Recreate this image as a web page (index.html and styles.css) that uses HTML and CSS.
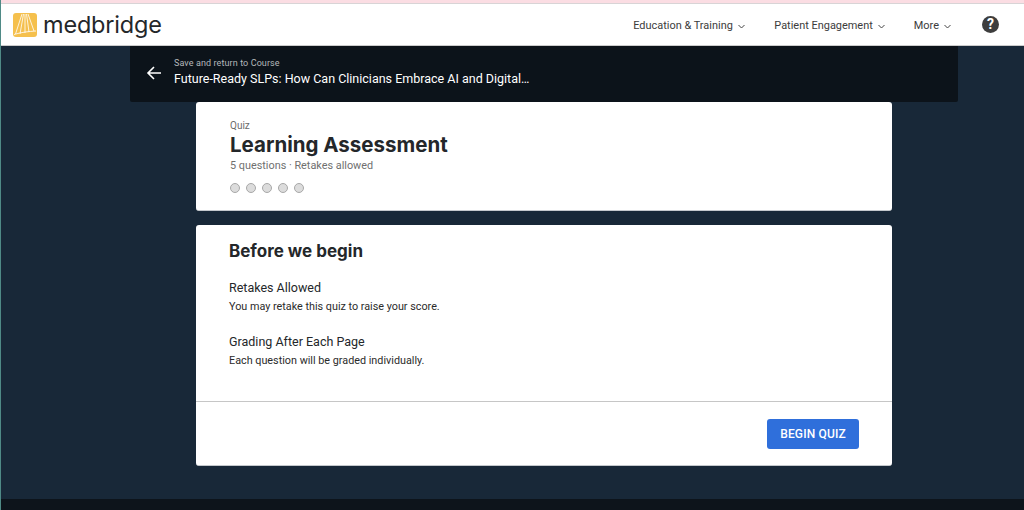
FILE: index.html
```html
<!DOCTYPE html>
<html lang="en">
<head>
<meta charset="utf-8">
<title>Learning Assessment</title>
<link rel="stylesheet" href="styles.css">
</head>
<body>
<div class="strip"></div>
<header class="topbar">
  <a class="brand">
    <svg class="logo" width="24" height="24" viewBox="0 0 24 24" aria-hidden="true">
      <rect width="24" height="24" rx="3" fill="#f5c04d"/>
      <path d="M9 1 2.500 21M10.500 1 7 21M12 1v19M13.500 1 16 19M15 1l6 17M1 21.500C9 19 16 18.500 23 18" fill="none" stroke="#fff" stroke-width=".8"/>
    </svg>
    <span class="wordmark">medbridge</span>
  </a>
  <nav class="nav">
    <a class="nav-item">Education &amp; Training <svg class="chev" width="7" height="5" viewBox="0 0 7 5"><path d="M.5 1l3 3 3-3" fill="none" stroke="#444" stroke-width="1"/></svg></a>
    <a class="nav-item">Patient Engagement <svg class="chev" width="7" height="5" viewBox="0 0 7 5"><path d="M.5 1l3 3 3-3" fill="none" stroke="#444" stroke-width="1"/></svg></a>
    <a class="nav-item">More <svg class="chev" width="7" height="5" viewBox="0 0 7 5"><path d="M.5 1l3 3 3-3" fill="none" stroke="#444" stroke-width="1"/></svg></a>
    <span class="help">?</span>
  </nav>
</header>
<main class="main">
  <div class="course-bar">
    <svg class="back" width="16" height="16" viewBox="0 0 16 16" aria-hidden="true"><path d="M15 8H2M8 2 2 8l6 6" fill="none" stroke="#fff" stroke-width="1.600"/></svg>
    <div class="course-text">
      <div class="course-label">Save and return to Course</div>
      <div class="course-title">Future-Ready SLPs: How Can Clinicians Embrace AI and Digital…</div>
    </div>
  </div>
  <section class="card card-head">
    <div class="eyebrow">Quiz</div>
    <h1 class="title">Learning Assessment</h1>
    <div class="meta">5 questions · Retakes allowed</div>
    <div class="dots"><i class="dot"></i><i class="dot"></i><i class="dot"></i><i class="dot"></i><i class="dot"></i></div>
  </section>
  <section class="card card-info">
    <div class="info-body">
      <h2 class="subtitle">Before we begin</h2>
      <div class="rule">
        <h3 class="rule-title">Retakes Allowed</h3>
        <p class="rule-text">You may retake this quiz to raise your score.</p>
      </div>
      <div class="rule">
        <h3 class="rule-title">Grading After Each Page</h3>
        <p class="rule-text">Each question will be graded individually.</p>
      </div>
    </div>
    <div class="info-foot"><button class="begin">BEGIN QUIZ</button></div>
  </section>
</main>
<footer class="footer"></footer>
</body>
</html>
```
FILE: styles.css
```css
* { box-sizing: border-box; }
html, body { margin: 0; height: 510px; overflow: hidden; }
body {
  display: flex;
  flex-direction: column;
  background: #182838;
  font-family: Roboto, "Liberation Sans", sans-serif;
  border-left: 1px solid #4f8a86;
}
.strip { height: 4px; background: #fbdde3; border-bottom: 1px solid #d8d4d6; flex: none; margin-left: -1px; }
.topbar {
  height: 42px;
  flex: none;
  background: #fff;
  border-bottom: 1px solid #ccc;
  display: flex;
  align-items: center;
  justify-content: space-between;
  padding: 0 25px 0 12px;
}
.brand { display: flex; align-items: center; gap: 6px; }
.logo { display: block; }
.wordmark { font-family: Inter, sans-serif; font-weight: 400; font-size: 23.500px; line-height: 30px; color: #24272a; letter-spacing: -.2px; }
.nav { display: flex; align-items: center; }
.nav-item { font-size: 10.950px; line-height: 16px; color: #3c3c3c; margin: 2px 29.500px 0 0; display: flex; align-items: center; gap: 5px; }
.nav-item:nth-child(2) { margin-right: 29px; }
.nav-item:nth-child(3) { margin-right: 31px; }
.chev { display: block; margin-top: 2px; }
.help {
  width: 17px; height: 17px; border-radius: 50%;
  background: #3d3d3d; color: #fff;
  font-size: 14px; font-weight: 700; line-height: 17px; text-align: center;
}
.main { flex: 1; display: flex; flex-direction: column; min-height: 0; margin-left: -1px; }
.course-bar {
  width: 828px; height: 56px; flex: none;
  margin-left: 130px;
  background: #0c131a;
  border-radius: 0 0 2px 2px;
  display: flex; align-items: center;
  padding: 0 0 0 16px;
  gap: 12px;
}
.back { margin-top: -3px; }
.course-text { margin-top: -3px; }
.course-label { font-size: 9px; line-height: 12px; color: #b4b8bb; letter-spacing: .1px; }
.course-title { font-size: 12.500px; line-height: 18px; color: #fff; margin-top: 1px; }
.card { width: 696px; background: #fff; border-radius: 3px; flex: none; margin-left: 196px; border-bottom: 1px solid #c4c8cc; }
.card-head { height: 109px; padding: 18px 34px 0; margin-bottom: 14px; }
.eyebrow { font-size: 10px; line-height: 12px; color: #6b6b6b; }
.title { margin: -1px 0 0; font-family: Inter, sans-serif; font-size: 20.500px; font-weight: 700; line-height: 27px; color: #24272a; }
.meta { font-size: 10.850px; line-height: 14px; color: #6f6f6f; margin-top: 1px; }
.dots { display: flex; gap: 6px; margin-top: 10px; }
.dot { width: 10px; height: 10px; border-radius: 50%; background: #dcdcdc; border: 1px solid #a8a8a8; }
.card-info { height: 241px; display: flex; flex-direction: column; }
.info-body { flex: none; height: 177px; padding: 14px 33px 0; border-bottom: 1px solid #c6c6c6; }
.subtitle { margin: 0 0 16px; font-family: Inter, sans-serif; font-size: 17px; font-weight: 700; line-height: 24px; color: #24272a; }
.rule { margin-bottom: 19px; }
.rule-title { margin: 0; font-size: 12.500px; font-weight: 400; line-height: 17px; color: #24272a; }
.rule-text { margin: 4px 0 0; font-size: 10.800px; line-height: 14px; color: #2b2b2b; }
.info-foot { flex: 1; display: flex; justify-content: flex-end; align-items: flex-start; padding: 17px 33px 0 0; }
.begin {
  width: 92px; height: 30px; border: 0; border-radius: 3px;
  background: #2f6fdb; color: #fff;
  font-family: Roboto, sans-serif; font-size: 12px; font-weight: 500; letter-spacing: .15px;
}
.footer { height: 11px; flex: none; background: #0d141b; }
```
